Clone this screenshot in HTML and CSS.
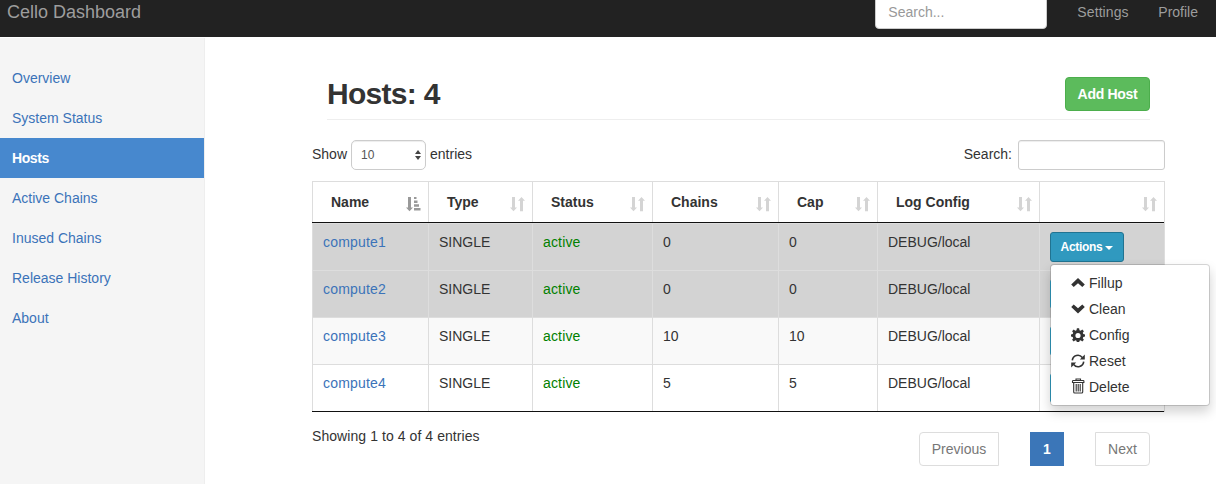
FILE: index.html
```html
<!DOCTYPE html>
<html lang="en">
<head>
<meta charset="utf-8">
<title>Cello Dashboard</title>
<link rel="stylesheet" href="styles.css">
</head>
<body>
<svg class="defs" width="0" height="0">
  <symbol id="sort" viewBox="0 0 15 15"><path d="M2 0h3v10.500h2L3.500 14.200 0 10.500h2zM8 3.700 11.500 0 15 3.700h-2v10.500h-3V3.700z"/></symbol>
  <symbol id="sort-asc" viewBox="0 0 15 15"><path d="M2 0h3v10.500h2L3.500 14.200 0 10.500h2zM8 0h2.500v2H8zM8 3.500h3.500v2.500H8zM8 7.300h5v2.500H8zM8 11h6.500v2.500H8z"/></symbol>
  <symbol id="up" viewBox="0 0 14 14"><path d="M7 2 13.800 8.500 11.300 11 7 7.200 2.700 11 .2 8.500z"/></symbol>
  <symbol id="down" viewBox="0 0 14 14"><path d="M7 11.500 .2 5 2.700 2.500 7 6.300 11.300 2.500 13.800 5z"/></symbol>
  <symbol id="cog" viewBox="0 0 14 14"><path fill-rule="evenodd" d="M5.900.3h2.200l.4 1.900 1.200.5 1.600-1.100 1.600 1.600-1.100 1.600.5 1.200 1.700.4v2.200l-1.700.4-.5 1.200 1.100 1.600-1.600 1.600-1.600-1.100-1.200.5-.4 1.900H5.900l-.4-1.900-1.200-.5-1.600 1.100-1.600-1.600 1.100-1.600L1.700 9 0 8.600V6.400L1.700 6l.5-1.200-1.100-1.600 1.600-1.600 1.600 1.100 1.200-.5zM7 4.900a2.600 2.600 0 1 0 0 5.200 2.600 2.600 0 0 0 0-5.200z"/></symbol>
  <symbol id="refresh" viewBox="0 0 14 14"><g fill="none" stroke="#333" stroke-width="1.600"><path d="M1.300 6.300A5.600 5.600 0 0 1 11.300 3.500M12.700 7.700A5.600 5.600 0 0 1 2.700 10.500"/></g><path d="M13.800.5v5H8.800zM.2 13.500v-5h5z"/></symbol>
  <symbol id="trash" viewBox="0 0 14 16"><g fill="none" stroke="#333"><path d="M5 2.500V1h4.500v1.500M1.500 4.500V3.200q0-.7.700-.7h10q.7 0 .7.700v1.300zM2.700 5v9q0 1 1 1h7q1 0 1-1V5M5.200 6v7.500M7.200 6v7.500M9.200 6v7.500" stroke-width="1.100"/></g></symbol>
</svg>
<header class="navbar">
  <a class="brand">Cello Dashboard</a>
  <nav class="navright">
    <input class="navsearch" placeholder="Search...">
    <a class="settings">Settings</a>
    <a>Profile</a>
  </nav>
</header>
<div class="layout">
  <aside class="sidebar">
    <a>Overview</a><a>System Status</a><a class="active">Hosts</a><a>Active Chains</a><a>Inused Chains</a><a>Release History</a><a>About</a>
  </aside>
  <main class="main">
    <div class="heading"><h1>Hosts: 4</h1><button class="add">Add Host</button></div>
    <div class="controls">
      <div class="length">Show <span class="select">10<svg width="6" height="10" viewBox="0 0 6 10"><path d="M0 4 3 0l3 4zM0 6h6l-3 4z"/></svg></span> entries</div>
      <label class="filter">Search: <input></label>
    </div>
    <div class="table">
      <div class="row head">
        <div>Name<svg class="sorted"><use href="#sort-asc"/></svg></div>
        <div>Type<svg><use href="#sort"/></svg></div>
        <div>Status<svg><use href="#sort"/></svg></div>
        <div>Chains<svg><use href="#sort"/></svg></div>
        <div>Cap<svg><use href="#sort"/></svg></div>
        <div>Log Config<svg><use href="#sort"/></svg></div>
        <div><svg><use href="#sort"/></svg></div>
      </div>
      <div class="row dark">
        <div><a>compute1</a></div><div class="type">SINGLE</div><div class="ok">active</div><div>0</div><div>0</div><div class="log">DEBUG/local</div>
        <div class="act"><button class="actions">Actions <i></i></button>
          <ul class="menu">
            <li><svg><use href="#up"/></svg><span>Fillup</span></li>
            <li><svg><use href="#down"/></svg><span>Clean</span></li>
            <li><svg><use href="#cog"/></svg><span>Config</span></li>
            <li><svg><use href="#refresh"/></svg><span>Reset</span></li>
            <li><svg class="trash"><use href="#trash"/></svg><span>Delete</span></li>
          </ul>
        </div>
      </div>
      <div class="row dark"><div><a>compute2</a></div><div class="type">SINGLE</div><div class="ok">active</div><div>0</div><div>0</div><div class="log">DEBUG/local</div><div class="act"><button class="actions covered"></button></div></div>
      <div class="row odd"><div><a>compute3</a></div><div class="type">SINGLE</div><div class="ok">active</div><div>10</div><div>10</div><div class="log">DEBUG/local</div><div class="act"><button class="actions covered"></button></div></div>
      <div class="row"><div><a>compute4</a></div><div class="type">SINGLE</div><div class="ok">active</div><div>5</div><div>5</div><div class="log">DEBUG/local</div><div class="act"><button class="actions covered"></button></div></div>
    </div>
    <div class="footer">
      <div class="info">Showing 1 to 4 of 4 entries</div>
      <div class="pages"><a class="prev">Previous</a><a class="current">1</a><a class="next">Next</a></div>
    </div>
  </main>
</div>
</body>
</html>
```
FILE: styles.css
```css
* { box-sizing: border-box; }
body { margin: 0; height: 484px; overflow: hidden; background: #fff; color: #333; font: 14px/20px "Liberation Sans", Arial, sans-serif; }
button, input { font: inherit; }
.defs { display: block; height: 0; }
.navbar { height: 37px; background: #222; color: #9d9d9d; display: flex; justify-content: space-between; padding: 0 18px 0 7px; line-height: 24px; overflow: hidden; }
.brand { font-size: 18px; }
.navright { display: flex; }
.navsearch { width: 172px; height: 34px; margin: -5px 30px 0 0; border: 1px solid #ccc; border-radius: 4px; padding: 0 12px; background: #fff; }
.navsearch::placeholder { color: #999; opacity: 1; }
.settings { width: 51px; margin-right: 30px; letter-spacing: .1px; }
.layout { display: flex; height: 446px; margin-top: 1px; }
.sidebar { width: 205px; padding-top: 20px; background: #f5f5f5; border-right: 1px solid #eee; }
.sidebar a { display: block; height: 40px; padding: 10px 12px; color: #3b73b9; }
.sidebar .active { background: #4788ce; color: #fff; font-weight: bold; letter-spacing: -.4px; }
.main { width: 853px; margin-left: 107px; }
.heading { height: 82px; margin: 0 15px; border-bottom: 1px solid #eee; display: flex; justify-content: space-between; align-items: flex-start; }
h1 { margin: 39px 0 0; font-size: 30px; line-height: 33px; font-weight: bold; letter-spacing: -.7px; }
.add { width: 85px; height: 34px; margin-top: 39px; padding: 0; border: 1px solid #4cae4c; border-radius: 4px; background: #5cbb5c; color: #fff; font-weight: bold; letter-spacing: -.3px; }
.controls { display: flex; justify-content: space-between; height: 61px; padding-top: 20px; }
.length { display: flex; line-height: 28px; height: 30px; }
.select { width: 75px; height: 30px; margin: 0 4px 0 4px; padding: 0 4px 0 9px; border: 1px solid #ccc; border-radius: 5px; font-size: 12px; color: #555; display: flex; justify-content: space-between; align-items: center; box-shadow: inset 0 1px 1px rgba(0,0,0,.075); }
.select svg { fill: #444; }
.filter { display: flex; line-height: 28px; }
.filter input { width: 147px; height: 30px; margin-left: 6px; border: 1px solid #ccc; border-radius: 3px; box-shadow: inset 0 1px 1px rgba(0,0,0,.075); }
.table { border: solid #ddd; border-width: 1px 1px 0 0; position: relative; }
.row { display: grid; grid-template-columns: 116px 104px 120px 126px 99px 162px 125px; height: 47px; }
.row > div { border: solid #ddd; border-width: 1px 0 0 1px; padding: 8px 10px; }
.row a { color: #3b73b9; letter-spacing: .2px; }
.head { height: 41px; border-bottom: 1px solid #111; font-weight: bold; }
.row.head > div { border-top: 0; display: flex; justify-content: space-between; padding: 10px 7px 0 18px; }
.head svg { width: 15px; height: 15px; fill: #d4d4d4; margin: 5px 0 0 auto; }
.head .sorted { fill: #999; }
.dark { background: #d3d3d3; }
.odd { background: #f9f9f9; }
.row:last-child { height: 48px; border-bottom: 1px solid #111; }
.ok { color: #008000; letter-spacing: .15px; }
.row .act { position: relative; }
.actions { display: block; width: 74px; height: 30px; padding: 0; border: 1px solid #217391; border-radius: 3px; background: #3099bf; color: #fff; font-size: 12px; font-weight: bold; letter-spacing: -.3px; }
.actions i { display: inline-block; border: 4px solid transparent; border-top-color: #fff; border-bottom: 0; vertical-align: middle; }
.actions.covered { border-color: #38b0da; }
.menu { position: absolute; z-index: 5; top: 40px; left: 10px; width: 160px; height: 142px; margin: 0; padding: 5px 0; list-style: none; background: #fff; background-clip: padding-box; border: 1px solid rgba(0,0,0,.15); border-radius: 4px; box-shadow: 0 6px 12px rgba(0,0,0,.175); }
.menu li { display: flex; align-items: center; gap: 4px; height: 26px; padding-left: 20px; }
.menu svg { width: 14px; height: 14px; fill: #333; }
.menu svg.trash { height: 16px; margin-top: -3px; }
.footer { display: flex; justify-content: space-between; }
.info { margin-top: 14px; letter-spacing: .07px; }
.pages { display: flex; gap: 31px; margin: 20px 15px 0 0; }
.pages a { height: 34px; border: 1px solid #ddd; line-height: 32px; text-align: center; color: #777; }
.pages .prev { width: 80px; border-radius: 4px 0 0 4px; }
.pages .next { width: 55px; border-radius: 0 4px 4px 0; }
.pages .current { width: 34px; background: #3b76b8; border-color: #3b76b8; color: #fff; font-weight: bold; }
```
